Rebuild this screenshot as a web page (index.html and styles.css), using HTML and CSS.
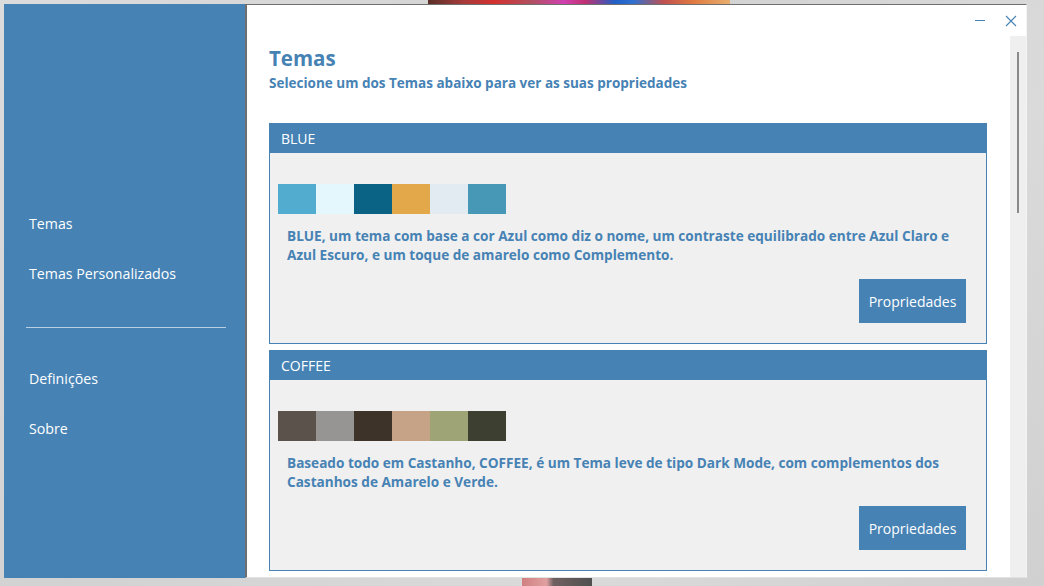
FILE: index.html
```html
<!DOCTYPE html>
<html lang="pt">
<head>
<meta charset="utf-8">
<title>Temas</title>
<link rel="stylesheet" href="styles.css">
</head>
<body>
<div class="desk-strip-top"></div>
<div class="desk-strip-bottom"></div>
<div class="window">
  <aside class="sidebar">
    <nav class="nav">
      <div class="nav-item">Temas</div>
      <div class="nav-item">Temas Personalizados</div>
      <div class="nav-sep"></div>
      <div class="nav-item">Definições</div>
      <div class="nav-item">Sobre</div>
    </nav>
  </aside>
  <main class="main">
    <div class="titlebar">
      <span class="ctl ctl-min"><svg class="ico" width="12" height="12" viewBox="0 0 12 12"><line x1="1" y1="5.5" x2="11" y2="5.5" stroke="#4682b4" stroke-width="1"/></svg></span>
      <span class="ctl ctl-close"><svg class="ico" width="12" height="12" viewBox="0 0 12 12"><path d="M1 1 L11 11 M11 1 L1 11" stroke="#4682b4" stroke-width="1.1" fill="none"/></svg></span>
    </div>
    <div class="body">
      <div class="content">
        <h1 class="title">Temas</h1>
        <p class="subtitle">Selecione um dos Temas abaixo para ver as suas propriedades</p>

        <section class="card">
          <div class="card-head">BLUE</div>
          <div class="card-body">
            <div class="swatches">
              <span class="sw" style="background:#52acd0"></span>
              <span class="sw" style="background:#e4f7fc"></span>
              <span class="sw" style="background:#0a6384"></span>
              <span class="sw" style="background:#e2a84a"></span>
              <span class="sw" style="background:#e2ebf2"></span>
              <span class="sw" style="background:#4798b6"></span>
            </div>
            <p class="desc">BLUE, um tema com base a cor Azul como diz o nome, um contraste equilibrado entre Azul Claro e Azul Escuro, e um toque de amarelo como Complemento.</p>
            <div class="actions"><button class="btn">Propriedades</button></div>
          </div>
        </section>

        <section class="card">
          <div class="card-head">COFFEE</div>
          <div class="card-body">
            <div class="swatches">
              <span class="sw" style="background:#5b524b"></span>
              <span class="sw" style="background:#979593"></span>
              <span class="sw" style="background:#3e3329"></span>
              <span class="sw" style="background:#c6a387"></span>
              <span class="sw" style="background:#9ea475"></span>
              <span class="sw" style="background:#3d4031"></span>
            </div>
            <p class="desc">Baseado todo em Castanho, COFFEE, é um Tema leve de tipo Dark Mode, com complementos dos Castanhos de Amarelo e Verde.</p>
            <div class="actions"><button class="btn">Propriedades</button></div>
          </div>
        </section>
      </div>
      <div class="scrollbar"><div class="thumb"></div></div>
    </div>
  </main>
</div>
</body>
</html>
```

FILE: styles.css
```css
* { box-sizing: border-box; }
html, body { margin: 0; padding: 0; }
body {
  width: 1044px;
  height: 586px;
  overflow: hidden;
  background: linear-gradient(135deg, #dcdcdc 0%, #d2d2d2 40%, #dadada 70%, #d0d0d0 100%);
  font-family: "Open Sans", "Noto Sans", sans-serif;
  padding: 4px 0 0 4px;
  position: relative;
}
.desk-strip-top {
  position: absolute;
  left: 428px; top: 0;
  width: 302px; height: 4px;
  background: linear-gradient(90deg, #5a3028 0%, #a83a3a 12%, #d4302e 22%, #b05060 34%, #d040b0 45%, #c03070 52%, #2060c8 62%, #3070d0 68%, #c05050 78%, #e07a40 88%, #e8b070 100%);
}
.desk-strip-bottom {
  position: absolute;
  left: 522px; top: 578px;
  width: 70px; height: 8px;
  background: linear-gradient(90deg, #d08080 0%, #e0a0a0 35%, #706060 45%, #505050 100%);
}
.window {
  position: relative;
  display: flex;
  width: 1023px;
  height: 574px;
}
.sidebar {
  width: 241px;
  flex: none;
  background: #4682b4;
  padding-top: 195px;
}
.nav { display: flex; flex-direction: column; }
.nav-item {
  height: 50px;
  line-height: 50px;
  padding-left: 25px;
  color: #ffffff;
  font-size: 14.2px;
}
.nav-sep {
  height: 1px;
  margin: 28px 19px 26px 22px;
  background: #b8cfe4;
}
.main {
  flex: 1;
  display: flex;
  flex-direction: column;
  background: #ffffff;
  border-left: 2px solid #6f6f6f;
  border-top: 1px solid #6f6f6f;
  border-right: 1px solid #f4f4f4;
  border-bottom: 1px solid #e2e2e2;
}
.titlebar {
  height: 31px;
  flex: none;
  display: flex;
  justify-content: flex-end;
  align-items: flex-start;
  padding-right: 9px;
}
.ctl { display: block; width: 12px; height: 12px; }
.ico { display: block; }
.ctl-min { margin-top: 10px; margin-right: 19px; }
.ctl-close { margin-top: 10px; }
.body {
  flex: 1;
  display: flex;
  min-height: 0;
}
.content {
  flex: 1;
  overflow: hidden;
  padding: 9px 23px 0 22px;
}
.title {
  margin: 0;
  font-size: 20.5px;
  line-height: 26px;
  font-weight: 700;
  color: #4682b4;
}
.subtitle {
  margin: 4px 0 0;
  font-size: 13.5px;
  line-height: 16px;
  font-weight: 700;
  color: #4682b4;
}
.card {
  border: 1px solid #4682b4;
  background: #f0f0f0;
  margin-top: 32px;
}
.card + .card { margin-top: 6px; }
.card-head {
  height: 29px;
  line-height: 29px;
  background: #4682b4;
  color: #ffffff;
  font-size: 14px;
  padding-left: 11px;
}
.card-body {
  padding: 31px 20px 20px 8px;
}
.swatches { display: flex; height: 30px; }
.sw { width: 38px; height: 30px; display: block; }
.desc {
  margin: 12px 0 0 9px;
  font-size: 13.6px;
  line-height: 19px;
  font-weight: 700;
  color: #4682b4;
  max-width: 680px;
}
.actions {
  display: flex;
  justify-content: flex-end;
  margin-top: 15px;
}
.btn {
  width: 107px;
  height: 44px;
  border: none;
  background: #4682b4;
  color: #ffffff;
  font-family: "Open Sans", "Noto Sans", sans-serif;
  font-size: 14px;
  padding: 0;
}
.scrollbar {
  width: 16px;
  flex: none;
  background: #efefef;
  position: relative;
}
.thumb {
  position: absolute;
  left: 7px;
  top: 16px;
  width: 2px;
  height: 161px;
  background: #8a8a8a;
}
```
